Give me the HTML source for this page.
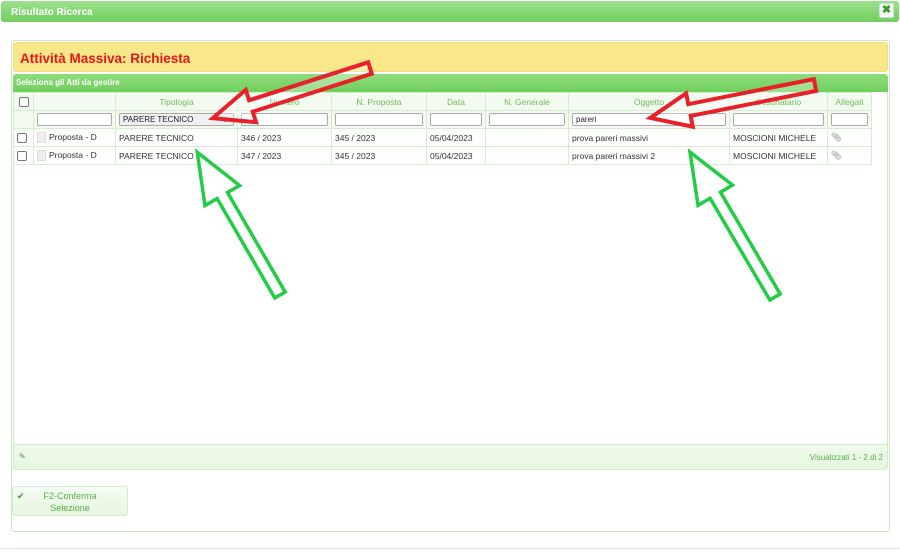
<!DOCTYPE html>
<html><head><meta charset="utf-8"><style>
*{box-sizing:border-box;margin:0;padding:0}
body{width:900px;height:552px;background:#fff;font-family:"Liberation Sans",sans-serif;position:relative;overflow:hidden;font-size:9px}
.tb{position:absolute;left:1px;top:1px;width:898px;height:21px;background:linear-gradient(#9ee08e,#6fcf5c);border-radius:3px;color:#fff;font-size:10px;font-weight:bold;padding:6px 10px}
.x{position:absolute;right:6px;top:3px;width:15px;height:15px;background:#f4fbf2;border:1px solid #cde;border-radius:2px;color:#3a9a2a;font-size:11px;font-weight:bold;text-align:center;line-height:13px}
.panel{position:absolute;left:11px;top:40px;width:879px;height:492px;border:1px solid #c9e8c0;border-radius:3px}
.yel{position:absolute;left:13px;top:42px;width:875px;height:30px;background:#f8e889;border:1px solid #eedc80;border-radius:3px;color:#e8161b;font-size:13.5px;font-weight:bold;padding:8px 6px}
.gh{position:absolute;left:13px;top:74px;width:875px;height:18px;background:linear-gradient(#8fdc7e,#70cf5c);border-radius:3px 3px 0 0;color:#fff;font-size:8px;font-weight:bold;padding:4px 3px}
.grid{position:absolute;left:13px;top:92px;width:875px;height:352px;border-left:1px solid #cfe9c6;border-right:1px solid #cfe9c6}
table{position:absolute;left:13px;top:92px;border-collapse:collapse}
td{border:1px solid #d6ecd0;height:18px;padding:0 3px;white-space:nowrap;color:#333;font-size:8.5px}
tr.h td{background:#f3fbf0;color:#6bbd58;text-align:center;height:18px}
tr.f td{background:#f3fbf0;height:18px}
.in{height:13px;border:1px solid #aaa;border-radius:2px;background:#fff;font-size:8px;padding:1px 3px;color:#222}
.cb{display:inline-block;width:10px;height:10px;border:1px solid #777;border-radius:2px;background:#fff;vertical-align:middle}
.doc{display:inline-block;width:9px;height:11px;background:#eee;border:1px solid #ddd;vertical-align:middle;margin-right:3px}
.ft{position:absolute;left:13px;top:444px;width:875px;height:26px;background:linear-gradient(#f0faec,#e6f6e0);border:1px solid #d0ecc6;border-radius:0 0 3px 3px;color:#5bb04a;font-size:8px}
.btn{position:absolute;left:12px;top:486px;width:116px;height:30px;background:linear-gradient(#f4fcf1,#e6f6e0);border:1px solid #d6ecd0;border-radius:3px;color:#5aaa48;font-size:9px;text-align:center;line-height:12px;padding-top:3px}
.bl{position:absolute;left:0;top:548px;width:900px;height:1px;background:#d6e8d0}
</style></head><body>
<div class="tb">Risultato Ricerca</div><div class="x">✖</div>
<div class="panel"></div>
<div class="yel">Attività Massiva: Richiesta</div>
<div class="gh">Seleziona gli Atti da gestire</div>
<div class="grid"></div>
<table>
<tr class="h"><td style="width:20px"><span class="cb"></span></td><td style="width:82px"></td><td style="width:122px">Tipologia</td><td style="width:94px">Numero</td><td style="width:95px">N. Proposta</td><td style="width:59px">Data</td><td style="width:83px">N. Generale</td><td style="width:161px">Oggetto</td><td style="width:98px">Destinatario</td><td style="width:44px">Allegati</td></tr>
<tr class="f"><td></td><td><div class="in"></div></td><td><div class="in" style="background:#eef0f4;position:relative">PARERE TECNICO<span style="position:absolute;right:4px">⌄</span></div></td><td><div class="in"></div></td><td><div class="in"></div></td><td><div class="in"></div></td><td><div class="in"></div></td><td><div class="in">pareri</div></td><td><div class="in"></div></td><td><div class="in"></div></td></tr>
<tr><td><span class="cb"></span></td><td><span class="doc"></span>Proposta - D</td><td>PARERE TECNICO</td><td>346 / 2023</td><td>345 / 2023</td><td>05/04/2023</td><td></td><td>prova pareri massivi</td><td>MOSCIONI MICHELE</td><td style="color:#888">📎︎</td></tr>
<tr><td><span class="cb"></span></td><td><span class="doc"></span>Proposta - D</td><td>PARERE TECNICO</td><td>347 / 2023</td><td>345 / 2023</td><td>05/04/2023</td><td></td><td>prova pareri massivi 2</td><td>MOSCIONI MICHELE</td><td style="color:#888">📎︎</td></tr>
</table>
<div class="ft"><span style="position:absolute;left:5px;top:7px;color:#4a9a3a">✎</span><span style="position:absolute;right:4px;top:8px">Visualizzati 1 - 2 di 2</span></div>
<div class="btn"><span style="position:absolute;left:4px;top:3px;color:#3a9a2a">✔</span>F2-Conferma<br>Selezione</div>
<div class="bl"></div>
<svg width="900" height="552" style="position:absolute;left:0;top:0">
<g fill="rgba(255,255,255,0.3)" stroke-width="4" stroke-linejoin="miter">
<polygon transform="translate(370,68) rotate(162.3)" points="0,-6 125,-6 125,-17 165,0 125,17 125,6 0,6" stroke="#e8202a"/>
<polygon transform="translate(815,85) rotate(168.7)" points="0,-6 128,-6 128,-17 168,0 128,17 128,6 0,6" stroke="#e8202a"/>
<polygon transform="translate(280,295) rotate(-120.1)" points="0,-6 115,-6 115,-20 165,0 115,20 115,6 0,6" stroke="#22cc44" stroke-width="3.5"/>
<polygon transform="translate(775,297) rotate(-120.4)" points="0,-6 118,-6 118,-20 168,0 118,20 118,6 0,6" stroke="#22cc44" stroke-width="3.5"/>
</g></svg>
</body></html>
